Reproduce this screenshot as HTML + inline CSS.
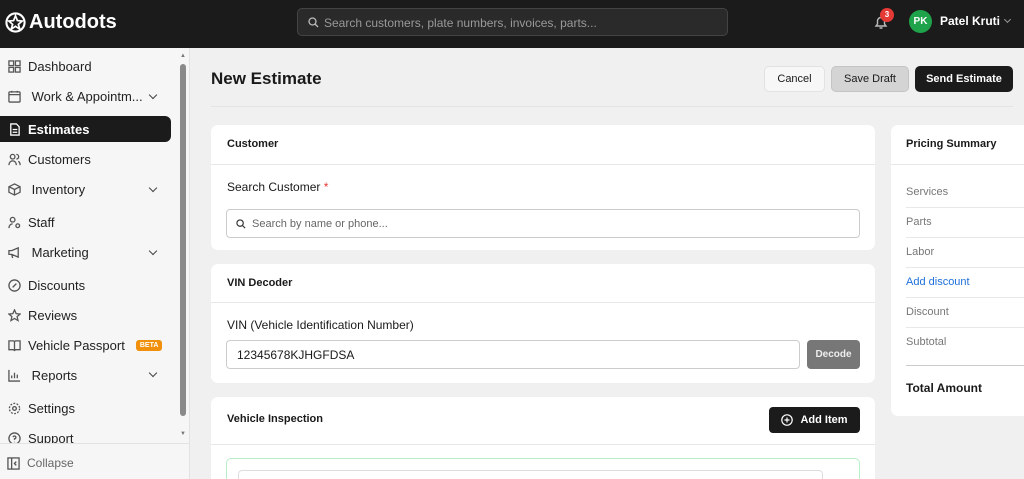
<!DOCTYPE html>
<html><head><meta charset="utf-8"><style>
*{box-sizing:border-box;margin:0;padding:0}
html,body{width:1024px;height:479px;overflow:hidden}
body{font-family:"Liberation Sans",sans-serif;background:#f0f0f0;position:relative;color:#1a1a1a}
.top{position:absolute;left:0;top:0;width:1024px;height:48px;background:#1b1b1b}
.logo{position:absolute;left:5px;top:11px;color:#fff;font-size:20px;font-weight:bold;display:flex;align-items:center;gap:3px}
.search{position:absolute;left:297px;top:8px;width:431px;height:28px;border:1px solid #444;background:#2a2a2a;border-radius:5px;color:#999;font-size:12px;padding:7px 0 0 26px}
.side{position:absolute;left:0;top:48px;width:190px;height:431px;background:#f6f6f6;border-right:1px solid #e2e2e2;overflow:hidden}
.it{position:absolute;left:8px;font-size:13px;color:#222;display:flex;align-items:center;gap:7px}
.it svg{width:13px;height:13px;stroke:#555;fill:none;stroke-width:1.4}
.chev{position:absolute;left:150px;width:6px;height:6px;border-right:1.3px solid #444;border-bottom:1.3px solid #444;transform:rotate(45deg)}
.card{position:absolute;background:#fff;border-radius:7px}
.ch{font-size:11px;font-weight:bold;position:absolute;left:16px}
.line{position:absolute;left:0;right:0;height:1px;background:#e8e8e8}
.btn{position:absolute;top:66px;height:26px;border-radius:5px;font-size:11px;display:flex;align-items:center;justify-content:center}
.ps{position:absolute;left:906px;font-size:11px;color:#777}
.pl{position:absolute;left:906px;width:118px;height:1px;background:#e8e8e8}
</style></head><body>
<div class="top">
<div class="logo"><svg width="21" height="21" viewBox="0 0 22 22"><circle cx="11" cy="11" r="9.5" stroke="#fff" stroke-width="2.2" fill="none"/><path d="M11 4 L13 9 L18 9.5 L14 13 L15.5 18 L11 15 L6.5 18 L8 13 L4 9.5 L9 9 Z" stroke="#fff" stroke-width="1.8" fill="none"/></svg>Autodots</div>
<div class="search"><svg style="position:absolute;left:10px;top:8px" width="11" height="11" viewBox="0 0 11 11"><circle cx="4.5" cy="4.5" r="3.5" stroke="#bbb" fill="none" stroke-width="1.3"/><path d="M7 7l3 3" stroke="#bbb" stroke-width="1.3"/></svg>Search customers, plate numbers, invoices, parts...</div>
<svg style="position:absolute;left:873px;top:14px" width="16" height="16" viewBox="0 0 16 16"><path d="M3 12h10l-1.5-2V7a3.5 3.5 0 0 0-7 0v3z M6.5 14h3" stroke="#bbb" fill="none" stroke-width="1.4"/></svg>
<div style="position:absolute;left:880px;top:8px;width:14px;height:14px;border-radius:7px;background:#e53935;color:#fff;font-size:8px;font-weight:bold;text-align:center;line-height:14px">3</div>
<div style="position:absolute;left:909px;top:10px;width:23px;height:23px;border-radius:12px;background:#1fa34a;color:#fff;font-size:10px;font-weight:bold;text-align:center;line-height:23px">PK</div>
<div style="position:absolute;left:940px;top:14px;color:#fff;font-size:12px;font-weight:bold">Patel Kruti</div>
<div style="position:absolute;left:1005px;top:17px;width:5px;height:5px;border-right:1px solid #999;border-bottom:1px solid #999;transform:rotate(45deg)"></div>
</div>
<div class="side">
<div style="position:absolute;left:180px;top:16px;width:6px;height:352px;background:#8a8a8a;border-radius:3px"></div>
<div style="position:absolute;left:180px;top:5px;font-size:6px;color:#777">▲</div>
<div style="position:absolute;left:180px;top:383px;font-size:6px;color:#777">▼</div>
<div style="position:absolute;left:0;top:68px;width:171px;height:26px;background:#1b1b1b;border-radius:0 6px 6px 0"></div>
<div class="it" style="top:11px"><svg viewBox="0 0 14 14"><rect x="1" y="1" width="5" height="5"/><rect x="8" y="1" width="5" height="5"/><rect x="1" y="8" width="5" height="5"/><rect x="8" y="8" width="5" height="5"/></svg>Dashboard</div>
<div class="it" style="top:41px"><svg viewBox="0 0 14 14"><rect x="1" y="2" width="12" height="11" rx="1"/><path d="M1 5h12M4 1v2M10 1v2"/></svg>&nbsp;Work &amp; Appointm...</div><div class="chev" style="top:44px"></div>
<div class="it" style="top:74px;color:#fff;font-weight:bold"><svg viewBox="0 0 14 14" style="stroke:#fff"><path d="M3 1h6l3 3v9H3z M5 7h5M5 10h5"/></svg>Estimates</div>
<div class="it" style="top:104px"><svg viewBox="0 0 14 14"><circle cx="5" cy="4" r="2.5"/><path d="M1 13c0-3 2-4.5 4-4.5s4 1.5 4 4.5M9 1.5a2.5 2.5 0 0 1 0 5M11 9c1.5.5 2 2 2 4"/></svg>Customers</div>
<div class="it" style="top:134px"><svg viewBox="0 0 14 14"><path d="M7 1l6 3v6l-6 3-6-3V4z M1 4l6 3 6-3M7 7v6"/></svg>&nbsp;Inventory</div><div class="chev" style="top:137px"></div>
<div class="it" style="top:167px"><svg viewBox="0 0 14 14"><circle cx="5" cy="4" r="2.5"/><path d="M1 13c0-3 2-4.5 4-4.5M10.5 8.5a2 2 0 1 1 0 4a2 2 0 1 1 0-4"/></svg>Staff</div>
<div class="it" style="top:197px"><svg viewBox="0 0 14 14"><path d="M1 5h3l7-3v10l-7-3H1z M4 9l1 4"/></svg>&nbsp;Marketing</div><div class="chev" style="top:200px"></div>
<div class="it" style="top:230px"><svg viewBox="0 0 14 14"><circle cx="7" cy="7" r="6"/><path d="M5 9l4-4"/></svg>Discounts</div>
<div class="it" style="top:260px"><svg viewBox="0 0 14 14"><path d="M7 1l1.8 4 4.2.4-3.2 2.8 1 4.2L7 10.2 3.2 12.4l1-4.2L1 5.4l4.2-.4z"/></svg>Reviews</div>
<div class="it" style="top:290px"><svg viewBox="0 0 14 14"><path d="M1 2h4.5A1.5 1.5 0 0 1 7 3.5V13a1.5 1.5 0 0 0-1.5-1.5H1z M13 2H8.5A1.5 1.5 0 0 0 7 3.5V13a1.5 1.5 0 0 1 1.5-1.5H13z"/></svg>Vehicle Passport <span style="background:#f0900c;color:#fff;font-size:7px;font-weight:bold;padding:2px 4px;border-radius:3px;margin-left:4px">BETA</span></div>
<div class="it" style="top:320px"><svg viewBox="0 0 14 14"><path d="M1 1v12h12M4 10V7M7 10V4M10 10V6"/></svg>&nbsp;Reports</div><div class="chev" style="top:322px"></div>
<div class="it" style="top:353px"><svg viewBox="0 0 14 14"><circle cx="7" cy="7" r="2"/><circle cx="7" cy="7" r="5.5" stroke-dasharray="2 1.5"/></svg>Settings</div>
<div class="it" style="top:383px"><svg viewBox="0 0 14 14"><circle cx="7" cy="7" r="6"/><path d="M5.5 5.5a1.5 1.5 0 1 1 1.5 1.8V8.5M7 10.5v.5"/></svg>Support</div>
<div style="position:absolute;left:0;top:395px;width:190px;height:36px;background:#f6f6f6;border-top:1px solid #e2e2e2"></div>
<div class="it" style="top:408px;left:7px;color:#666;font-size:12px"><svg viewBox="0 0 14 14"><rect x="1" y="1" width="12" height="12"/><path d="M5 1v12M10 5L8 7l2 2"/></svg>Collapse</div>
</div>
<div style="position:absolute;left:211px;top:69px;font-size:17px;font-weight:bold">New Estimate</div>
<div class="btn" style="left:764px;width:61px;background:#f7f7f7;border:1px solid #e2e2e2">Cancel</div>
<div class="btn" style="left:831px;width:78px;background:#d4d4d4;border:1px solid #c4c4c4">Save Draft</div>
<div class="btn" style="left:915px;width:98px;background:#1b1b1b;color:#fff;font-weight:bold">Send Estimate</div>
<div style="position:absolute;left:211px;top:106px;width:802px;height:1px;background:#e4e4e4"></div>

<div class="card" style="left:211px;top:125px;width:664px;height:125px">
<div class="ch" style="top:13px">Customer</div><div class="line" style="top:39px"></div>
<div style="position:absolute;left:16px;top:55px;font-size:12px">Search Customer <span style="color:#e53935">*</span></div>
<div style="position:absolute;left:15px;top:84px;width:634px;height:29px;border:1px solid #ccc;border-radius:4px;font-size:11px;color:#666;padding:8px 0 0 25px"><svg style="position:absolute;left:9px;top:9px" width="10" height="10" viewBox="0 0 11 11"><circle cx="4.5" cy="4.5" r="3.5" stroke="#333" fill="none" stroke-width="1.3"/><path d="M7 7l3 3" stroke="#333" stroke-width="1.3"/></svg>Search by name or phone...</div>
</div>
<div class="card" style="left:211px;top:264px;width:664px;height:119px">
<div class="ch" style="top:13px">VIN Decoder</div><div class="line" style="top:38px"></div>
<div style="position:absolute;left:16px;top:54px;font-size:12px">VIN (Vehicle Identification Number)</div>
<div style="position:absolute;left:15px;top:76px;width:574px;height:29px;border:1px solid #ccc;border-radius:4px;font-size:12px;padding:7px 0 0 10px">12345678KJHGFDSA</div>
<div style="position:absolute;left:596px;top:76px;width:53px;height:29px;background:#777;border-radius:4px;color:#eee;font-size:10px;font-weight:bold;text-align:center;line-height:29px">Decode</div>
</div>
<div class="card" style="left:211px;top:397px;width:664px;height:82px;border-radius:7px 7px 0 0;overflow:hidden">
<div class="ch" style="top:16px">Vehicle Inspection</div><div class="line" style="top:47px"></div>
<div style="position:absolute;left:558px;top:10px;width:91px;height:26px;background:#1b1b1b;border-radius:4px;color:#fff;font-size:11px;font-weight:bold;display:flex;align-items:center;justify-content:center;gap:7px"><svg width="12" height="12" viewBox="0 0 12 12"><circle cx="6" cy="6" r="5.2" stroke="#fff" fill="none" stroke-width="1.2"/><path d="M6 3.5v5M3.5 6h5" stroke="#fff" stroke-width="1.2"/></svg>Add Item</div>
<div style="position:absolute;left:15px;top:61px;width:634px;height:40px;border:1px solid #b5f0c8;border-radius:5px"></div>
<div style="position:absolute;left:27px;top:73px;width:585px;height:30px;border:1px solid #ddd;border-radius:4px"></div>
</div>
<div class="card" style="left:891px;top:125px;width:140px;height:291px"></div>
<div style="position:absolute;left:906px;top:138px;font-size:11px;font-weight:bold">Pricing Summary</div>
<div class="pl" style="top:164px;left:891px;width:133px"></div>
<div class="ps" style="top:186px">Services</div><div class="pl" style="top:207px"></div>
<div class="ps" style="top:216px">Parts</div><div class="pl" style="top:237px"></div>
<div class="ps" style="top:246px">Labor</div><div class="pl" style="top:267px"></div>
<div class="ps" style="top:276px;color:#1e6fd9">Add discount</div><div class="pl" style="top:297px"></div>
<div class="ps" style="top:306px">Discount</div><div class="pl" style="top:327px"></div>
<div class="ps" style="top:336px">Subtotal</div>
<div class="pl" style="top:365px;background:#ccc"></div>
<div class="ps" style="top:381px;color:#1a1a1a;font-weight:bold;font-size:12px">Total Amount</div>
</body></html>
